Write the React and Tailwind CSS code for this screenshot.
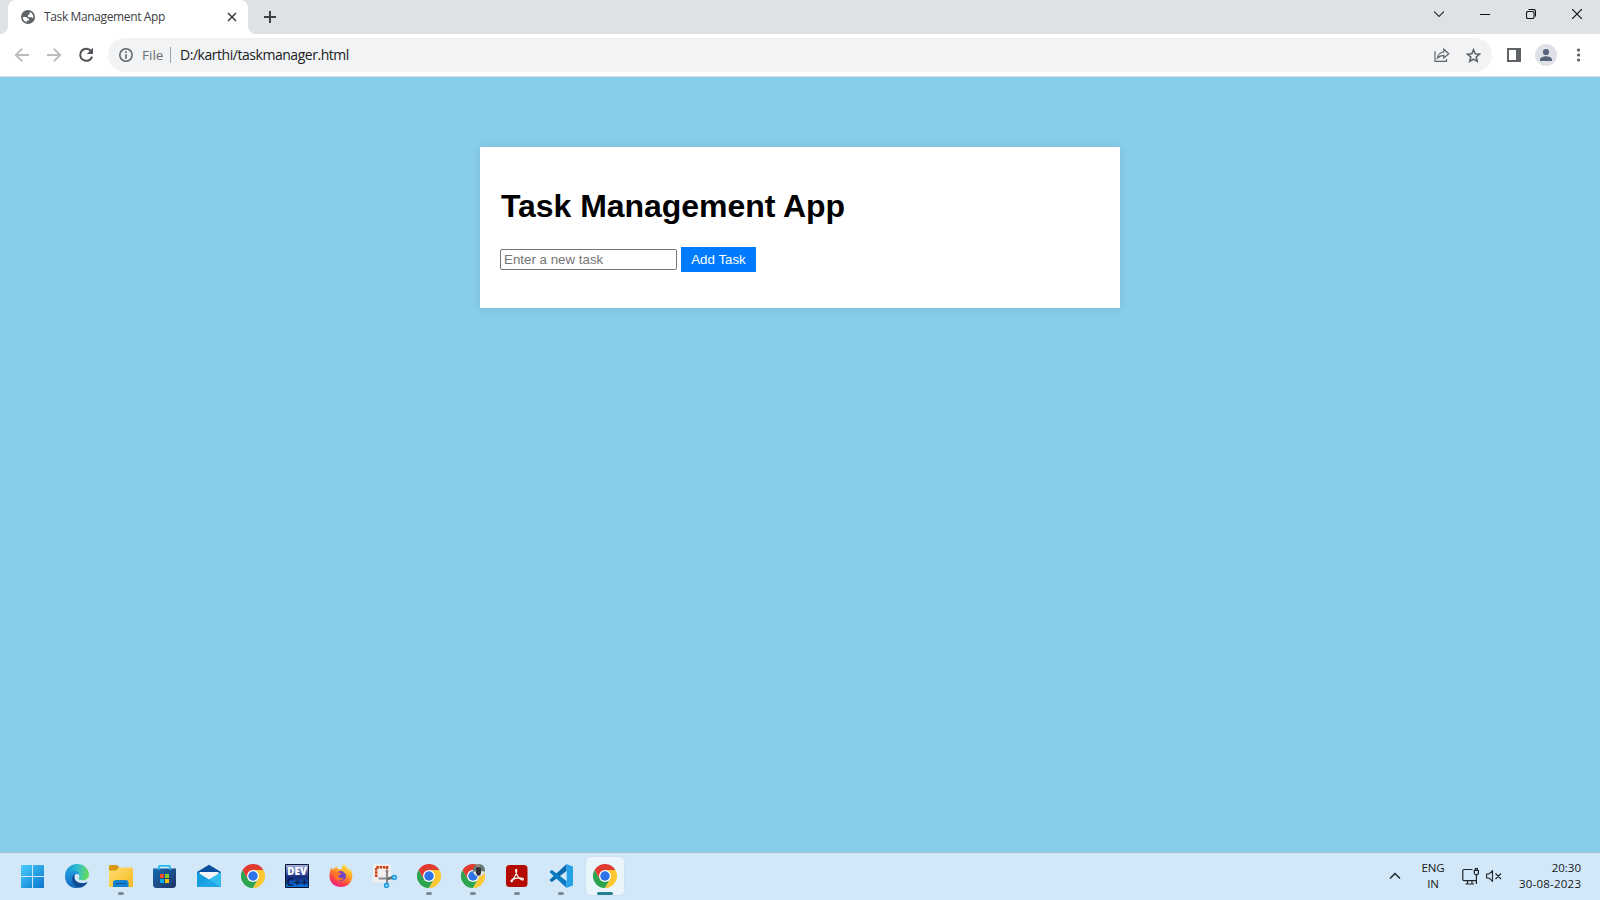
import React from "react";

const UI = "font-['Open_Sans','Noto_Sans',sans-serif]";

function Globe() {
  return (
    <svg className="size-[14px] shrink-0" viewBox="0 0 14 14">
      <circle cx="7" cy="7" r="7" fill="#5f6368" />
      <path d="M1.7 6.9H4.6C6.2 6.9 6.5 7.6 6.5 8.7H8V10.4H5.9V12.1C3.5 11.7 1.7 9.6 1.7 6.9ZM8.6 1.9C10.8 2.5 12.3 4.5 12.3 7 12.3 7.5 12.2 8 12.1 8.4 11.4 7.8 11.1 7.4 10.2 7.3H8.4C7.4 7.3 7 6.8 7 5.8 7 5 7.4 4.6 8.6 4.6Z" fill="#fff" />
    </svg>
  );
}

function Arrow({ flip }) {
  return (
    <svg className={flip ? "size-4 rotate-180" : "size-4"} viewBox="0 0 16 16" fill="none" stroke="#babcbe" strokeWidth="1.9">
      <path d="M15 8H2.5M8.2 1.6 1.8 8l6.4 6.4" />
    </svg>
  );
}

function Reload() {
  return (
    <svg className="size-4" viewBox="0 0 16 16">
      <path d="M13.4 4.4A6.1 6.1 0 1 0 14.1 9.6" fill="none" stroke="#505357" strokeWidth="2" />
      <path d="M15 .8V7H8.8Z" fill="#505357" />
    </svg>
  );
}

function Chrome({ avatar }) {
  return (
    <svg className="size-6" viewBox="0 0 48 48">
      <path d="M3.2 12A24 24 0 0 0 24 48L34.4 30H13.6Z" fill="#2da44e" />
      <path d="M44.8 12A24 24 0 0 1 24 48L34.4 30 24 12Z" fill="#fcc934" />
      <path d="M3.2 12 13.6 30 24 12H44.8A24 24 0 0 0 3.2 12Z" fill="#df3b30" />
      <circle cx="24" cy="24" r="12" fill="#fff" />
      <circle cx="24" cy="24" r="9.5" fill="#2f73e8" />
      {avatar && (
        <g>
          <circle cx="36" cy="12" r="12" fill="#657b70" />
          <path d="M24.500 16Q36 13 47.600 15A12 12 0 0 1 26 20Z" fill="#dce4e5" />
          <circle cx="35" cy="4" r="2.6" fill="#b38d7c" />
          <path d="M30 8 35 6 40 8V18L38 23H32L30 17Z" fill="#302e36" />
        </g>
      )}
    </svg>
  );
}

function Windows() {
  return (
    <svg className="size-6" viewBox="0 0 24 24">
      <defs>
        <linearGradient id="win" x1="0" y1="0" x2="1" y2="1">
          <stop stopColor="#4bd0fb" />
          <stop offset="1" stopColor="#0873ce" />
        </linearGradient>
      </defs>
      <path d="M.9 1H11V12H0V1.900Q0 1 .9 1ZM12 1h10.100q.9 0 .9.9V12H12ZM0 13H11V24H.9Q0 24 0 23.100ZM12 13H23V23.100q0 .9-.9.9H12Z" fill="url(#win)" />
    </svg>
  );
}

function Edge() {
  return (
    <svg className="size-6" viewBox="0 0 24 24">
      <defs>
        <linearGradient id="edgeTop" x1="0" y1=".4" x2="1" y2=".5">
          <stop stopColor="#168fd4" />
          <stop offset=".5" stopColor="#32bdcf" />
          <stop offset="1" stopColor="#68df55" />
        </linearGradient>
        <linearGradient id="edgeLow" x1="0" y1="0" x2="0" y2="1">
          <stop stopColor="#1b9de2" />
          <stop offset="1" stopColor="#1267bb" />
        </linearGradient>
      </defs>
      <path d="M0 11C1 4 6 0 12 0c7 0 12 5 12 10.200 0 4-3 6-6.300 6-2.700 0-4.100-.9-4.100-1.700 0-.5.900-1 .900-2.700C14.500 9.300 12 7.500 8.600 7.500 4 7.500.700 10 0 11Z" fill="url(#edgeTop)" />
      <path d="M0 12.200C0 8.700 4 6.500 8 6.500c4.500 0 6.800 2.800 6.500 5.500-.4-1.400-1.500-2-2.700-2-2.500 0-4.300 2.700-4.300 5.800 0 4 3 7.200 6.500 8C6 25.500 0 19.500 0 12.200Z" fill="url(#edgeLow)" />
      <path d="M11 9.600C8.500 10 7 12.500 7 15.300c0 5 4 8.700 7.700 8.500 3.300-.4 6-2.600 7.500-5 .3-.5-.1-.9-.6-.6C16.800 20.400 9.500 18.500 9.500 13c0-1.600.6-2.700 1.500-3.400Z" fill="#104c94" />
    </svg>
  );
}

function Folder() {
  return (
    <svg className="size-6" viewBox="0 0 24 24">
      <defs>
        <linearGradient id="fold" x1="0" y1="0" x2="1" y2="1">
          <stop stopColor="#ffdf75" />
          <stop offset="1" stopColor="#f8b91e" />
        </linearGradient>
      </defs>
      <path d="M0 2.500Q0 1 1.500 1H7.500L10 3V9H0Z" fill="#d8960c" />
      <path d="M0 6.500H7L10 3.500H22.500Q24 3.500 24 5V23H0Z" fill="url(#fold)" />
      <path d="M4 23V19Q4 16 7 16H16.500Q19.500 16 19.500 19V23Z" fill="#1683d1" />
      <path d="M7 19h9.500v1.200H7Z" fill="#0c5b9d" />
    </svg>
  );
}

function Store() {
  return (
    <svg className="size-6" viewBox="0 0 24 24">
      <defs>
        <linearGradient id="store" x1="0" y1="0" x2="1" y2="1">
          <stop stopColor="#1468ae" />
          <stop offset="1" stopColor="#203365" />
        </linearGradient>
      </defs>
      <path d="M0 4.500H23V20.500Q23 24 19.500 24H3.500Q0 24 0 20.500Z" fill="url(#store)" />
      <path d="M5.800 6V3.200Q5.800 1.900 7.100 1.900H15.900Q17.200 1.900 17.200 3.200V6" stroke="#24b9ed" strokeWidth="1.700" fill="none" />
      <path d="M7 10h4v4H7Z" fill="#f1511b" />
      <path d="M12 10h4v4h-4Z" fill="#80cc28" />
      <path d="M7 15h4v4H7Z" fill="#00adef" />
      <path d="M12 15h4v4h-4Z" fill="#fbbc09" />
    </svg>
  );
}

function Mail() {
  return (
    <svg className="size-6" viewBox="0 0 24 24">
      <path d="M0 8 12 .7 24 8V12H0Z" fill="#0a4f9d" />
      <path d="M2.500 8H21.500V14L12 19 2.500 13Z" fill="#f2f5f7" />
      <path d="M0 8 12 15.500 24 23H0Z" fill="#159de0" />
      <path d="M24 8V23H18L7.500 18.300Z" fill="#35bdf0" />
      <path d="M0 23 12 15.600 24 23Z" fill="#1ea6e7" />
    </svg>
  );
}

function DevCpp() {
  return (
    <svg className="size-6" viewBox="0 0 24 24">
      <defs>
        <linearGradient id="dev" x1="0" y1="0" x2="0" y2="1">
          <stop stopColor="#aebbe8" />
          <stop offset=".3" stopColor="#5365b0" />
          <stop offset=".55" stopColor="#142b78" />
          <stop offset="1" stopColor="#0878e0" />
        </linearGradient>
      </defs>
      <path d="M.5.5h23v23H.5Z" fill="url(#dev)" stroke="#0c132e" />
      <text x="2.300" y="11.200" fontFamily="Open Sans" fontWeight="800" fontSize="10" textLength="19.500" lengthAdjust="spacingAndGlyphs" fill="#fff">DEV</text>
      <text x="1.300" y="21.800" fontFamily="Open Sans" fontWeight="700" fontSize="10.500" textLength="21.500" lengthAdjust="spacingAndGlyphs" fill="#061b50">C++</text>
    </svg>
  );
}

function Firefox() {
  return (
    <svg className="size-6" viewBox="0 0 24 24">
      <defs>
        <linearGradient id="fox" x1=".8" y1="0" x2=".25" y2="1">
          <stop stopColor="#fff34a" />
          <stop offset=".4" stopColor="#ffa025" />
          <stop offset=".72" stopColor="#ff4644" />
          <stop offset="1" stopColor="#ed168b" />
        </linearGradient>
      </defs>
      <path d="M2.500 3.500C3 5 3.700 5.300 4.800 5.300 5.700 3.800 6.800 3 8.300 2.500 8 3.500 8.200 4.500 9 5.200L12.800 5C12.500 3 13.500 1.300 15.800 0 16 3.500 20 4 21 7L21.500 5C23 7.500 23.500 10 23.300 12.500 22.700 19 18 23 12 23 5.500 23 .5 18.500.5 12.300.5 9 1.200 6 2.500 3.500Z" fill="url(#fox)" />
      <circle cx="12" cy="12" r="5" fill="#7047c7" />
      <path d="M4 7.500 9.500 8.300 12.500 9.200C12 10.800 9.500 10.500 9.500 12.300 10 14.500 13 14.500 15 13.500 13.500 17.500 7 17.500 5.700 13.500Z" fill="#ff7528" />
      <path d="M12.800 5C16 6 17.700 8 17.500 10.500 17 9.500 16 8.700 14.800 8.500Z" fill="#ffbd35" />
    </svg>
  );
}

function Snip() {
  return (
    <svg className="size-6" viewBox="0 0 24 24">
      <rect width="18" height="18" rx="1.500" fill="#f0efee" />
      <path d="M3.200 13V3.200H14V9" fill="none" stroke="#cf3b12" strokeWidth="2.500" strokeDasharray="2.500 .8" />
      <path d="M14 6V19M5.500 14.500H19" stroke="#86898d" strokeWidth="2.100" />
      <path d="M14 15.500 19 13" stroke="#62676b" strokeWidth="2" />
      <circle cx="21.300" cy="13.500" r="1.900" fill="none" stroke="#159ce0" strokeWidth="1.600" />
      <circle cx="13.500" cy="21.500" r="1.900" fill="none" stroke="#159ce0" strokeWidth="1.600" />
    </svg>
  );
}

function Acrobat() {
  return (
    <svg className="size-6" viewBox="0 0 24 24">
      <rect x="1" y="1" width="21.500" height="22" rx="3.500" fill="#b30b00" />
      <path d="M6.300 16.500C8.500 14.800 11.300 11.500 11.700 6.500 11.700 5 10.500 5 10.700 6.700 11.200 11 13.700 14 17 15.900 18.700 16.500 18.900 14.500 17 14.200 13.700 13.600 9.200 14.600 7 16 5.300 17.300 6.500 18.500 7.700 17Z" fill="none" stroke="#fff" strokeWidth="1.200" />
    </svg>
  );
}

function VsCode() {
  return (
    <svg className="size-6" viewBox="0 0 24 24">
      <path d="M1.200 15.300 17.600 0V7L3.600 17.600Q2.800 18.200 2.100 17.600L.9 16.500Q.4 15.900 1.200 15.300Z" fill="#0869ad" />
      <path d="M1.200 8.700 17.600 24V17L3.600 6.400Q2.800 5.800 2.100 6.400L.9 7.500Q.4 8.100 1.200 8.700Z" fill="#087bc4" />
      <path d="M17 0 23.300 2.300Q24 2.700 24 3.500V20.500Q24 21.300 23.300 21.700L17 24Q17.700 23.500 17.700 22.500V1.500Q17.700.5 17 0Z" fill="#25a3ea" />
    </svg>
  );
}

const TASKBAR = [
  { icon: <Windows /> },
  { icon: <Edge /> },
  { icon: <Folder />, open: true },
  { icon: <Store /> },
  { icon: <Mail /> },
  { icon: <Chrome /> },
  { icon: <DevCpp /> },
  { icon: <Firefox /> },
  { icon: <Snip /> },
  { icon: <Chrome />, open: true },
  { icon: <Chrome avatar />, open: true },
  { icon: <Acrobat />, open: true },
  { icon: <VsCode />, open: true },
  { icon: <Chrome />, active: true },
];

function TabStrip() {
  return (
    <div className="flex h-[34px] shrink-0 bg-[#dee1e6]">
      <div className="w-2 bg-white">
        <div className="h-full rounded-br-lg bg-[#dee1e6]" />
      </div>
      <div className="flex w-60 items-center rounded-t-lg bg-white pr-[11px] pl-[13px]">
        <Globe />
        <span className={`${UI} ml-[9px] grow whitespace-nowrap text-[12px] leading-4 tracking-[-0.37px] text-[#3c4043]`}>Task Management App</span>
        <svg className="size-[10px]" viewBox="0 0 10 10" stroke="#3c4043" strokeWidth="1.600">
          <path d="m1 1 8 8M9 1 1 9" />
        </svg>
      </div>
      <div className="w-2 bg-white">
        <div className="h-full rounded-bl-lg bg-[#dee1e6]" />
      </div>
      <svg className="mt-[11px] ml-2 size-3" viewBox="0 0 12 12" stroke="#3c4043" strokeWidth="2">
        <path d="M6 0v12M0 6h12" />
      </svg>
      <div className="grow" />
      <div className="flex h-7 items-center gap-[36px] pr-[18px]">
        <svg className="size-[10px]" viewBox="0 0 10 10" fill="none" stroke="#303235" strokeWidth="1.100">
          <path d="m0 2.500 5 5 5-5" />
        </svg>
        <svg className="size-[10px]" viewBox="0 0 10 10"><path d="M0 5h10v1H0Z" fill="#111" /></svg>
        <svg className="size-[10px]" viewBox="0 0 10 10" fill="none" stroke="#111" strokeWidth="1.100">
          <rect x=".5" y="2.500" width="7.500" height="7" rx="1.400" />
          <path d="M2.500.5H7.500Q9.500.5 9.500 2.600V7.500" />
        </svg>
        <svg className="size-[10px]" viewBox="0 0 10 10" stroke="#111" strokeWidth="1.200"><path d="m0 0 10 10M10 0 0 10" /></svg>
      </div>
    </div>
  );
}

function Toolbar() {
  return (
    <div className="flex h-[43px] shrink-0 items-center border-b border-[#d5dade] bg-white pl-[14px]">
      <div className="flex w-[94px] gap-4">
        <Arrow />
        <Arrow flip />
        <Reload />
      </div>
      <div className={`${UI} flex h-[34px] w-[1384px] items-center rounded-full bg-[#f1f3f4] pr-[10px] pl-[11px] text-[14px] leading-5`}>
        <svg className="size-[14px]" viewBox="0 0 14 14">
          <circle cx="7" cy="7" r="6.200" fill="none" stroke="#5f6368" strokeWidth="1.500" />
          <path d="M6.200 3.300h1.600v1.600H6.200ZM6.200 6.200h1.600v4.500H6.200Z" fill="#5f6368" />
        </svg>
        <span className="ml-[9px] w-[28px] text-[13.500px] text-[#6a6e72]">File</span>
        <span className="h-4 w-px bg-[#9fa3a7]" />
        <span className="ml-[9px] grow whitespace-nowrap tracking-[-0.46px] text-[#202124]">D:/karthi/taskmanager.html</span>
        <svg className="size-4" viewBox="0 0 16 16" fill="none" stroke="#5f6368" strokeWidth="1.200">
          <path d="M1 4.200V14.400H12.500V12M3.500 11C4.200 7.200 6.500 5.300 9.800 5V2.200L14.800 6.700 9.800 11V8.300C7 8.300 5.200 9.200 3.500 11Z" />
        </svg>
        <svg className="mr-px ml-4 size-[15px]" viewBox="0 0 16 16" fill="none" stroke="#5f6368" strokeWidth="1.700">
          <path d="m8 1.900 1.800 4.300 4.700.4-3.600 3 1.100 4.600L8 11.800 4 14.200l1.100-4.600-3.600-3 4.700-.4Z" />
        </svg>
      </div>
      <svg className="ml-[15px] size-[14px]" viewBox="0 0 14 14">
        <path d="M0 0H14V14H0ZM2 2V12H9V2Z" fill="#5f6368" fillRule="evenodd" />
      </svg>
      <svg className="ml-[14px] size-[22px]" viewBox="0 0 22 22">
        <circle cx="11" cy="11" r="11" fill="#dee1e6" />
        <circle cx="11" cy="8" r="3.100" fill="#56637a" />
        <path d="M5 17V15.500C5 13.300 9 12.300 11 12.300S17 13.300 17 15.500V17Z" fill="#56637a" />
      </svg>
      <svg className="ml-[19px] h-[14px] w-1" viewBox="0 0 4 14" fill="#5f6368">
        <circle cx="2.500" cy="2" r="1.600" />
        <circle cx="2.500" cy="7" r="1.600" />
        <circle cx="2.500" cy="12" r="1.600" />
      </svg>
    </div>
  );
}

function Taskbar() {
  return (
    <div className="flex h-12 shrink-0 justify-between border-t border-[#a5bfcf] bg-[#d2e7f7]">
      <div className="flex pl-[11px]">
        {TASKBAR.map((item, i) => (
          <div key={i} className="flex w-11 justify-center pt-1">
            <div className={item.active ? "flex h-[38px] w-[38px] flex-col items-center rounded-[4px] bg-[#e9f4fb] pt-[7px] shadow-[0_0_1px_rgba(0,0,0,0.2)]" : "flex h-[38px] w-[38px] flex-col items-center pt-[7px]"}>
              {item.icon}
              {item.open && <span className="mt-1 h-[3px] w-1.5 rounded-full bg-[#7d8a94]" />}
              {item.active && <span className="mt-1 h-[3px] w-4 rounded-full bg-[#24808f]" />}
            </div>
          </div>
        ))}
      </div>
      <div className={`${UI} flex items-center pr-[19px] pb-px text-[11.500px] leading-4 text-[#15191c]`}>
        <svg className="mr-[20px] h-2 w-3" viewBox="0 0 12 8" fill="none" stroke="#20262a" strokeWidth="1.500">
          <path d="m1 6.500 5-5 5 5" />
        </svg>
        <div className="w-6 text-center tracking-[-0.2px] whitespace-nowrap">
          <div>ENG</div>
          <div>IN</div>
        </div>
        <svg className="ml-[17px] h-[17px] w-[17px]" viewBox="0 0 17 17" fill="none" stroke="#20262a" strokeWidth="1.200">
          <path d="M10.500 1.500H2Q.8 1.500.8 2.700V11.500Q.8 12.700 2 12.700H14.400V7M3.500 16H12M5.500 13V16M10 13V16M14.400 6.500V16" />
          <path d="M12.300 2.500H16.400V5Q16.400 6.800 14.400 6.800T12.300 5ZM13.300 2.500V.6H15.400V2.500" />
        </svg>
        <svg className="ml-[7px] h-3 w-4" viewBox="0 0 16 12" fill="none" stroke="#20262a" strokeWidth="1.100">
          <path d="M.6 4H3L6.500.8V11.200L3 8H.6ZM9.500 3.500l5.500 5.500M15 3.500 9.500 9" />
        </svg>
        <div className="ml-[17px] w-[62px] text-right whitespace-nowrap">
          <div>20:30</div>
          <div className="tracking-[0.22px]">30-08-2023</div>
        </div>
      </div>
    </div>
  );
}

export default function App() {
  return (
    <div className="flex h-[900px] w-[1600px] flex-col overflow-hidden">
      <TabStrip />
      <Toolbar />
      <main className="grow bg-[#87ceeb] pt-[70px] font-['Liberation_Sans',Arial,sans-serif]">
        <section className="mx-auto h-[161px] w-[640px] bg-white p-5 shadow-[0_0_10px_rgba(0,0,0,0.1)]">
          <h1 className="mt-[21px] pl-px text-[32px] leading-[37px] font-bold tracking-[-0.05px] text-black">Task Management App</h1>
          <div className="mt-[22px] flex items-center gap-1">
            <input type="text" placeholder="Enter a new task" className="h-[21px] w-[177px] rounded-[2px] border border-[#767676] bg-white px-[3px] text-[13.333px] leading-[15px] placeholder:text-[#757575]" />
            <button type="button" className="h-[25px] w-[75px] bg-[#007bff] text-[13.333px] leading-[15px] whitespace-nowrap text-white">Add Task</button>
          </div>
        </section>
      </main>
      <Taskbar />
    </div>
  );
}
